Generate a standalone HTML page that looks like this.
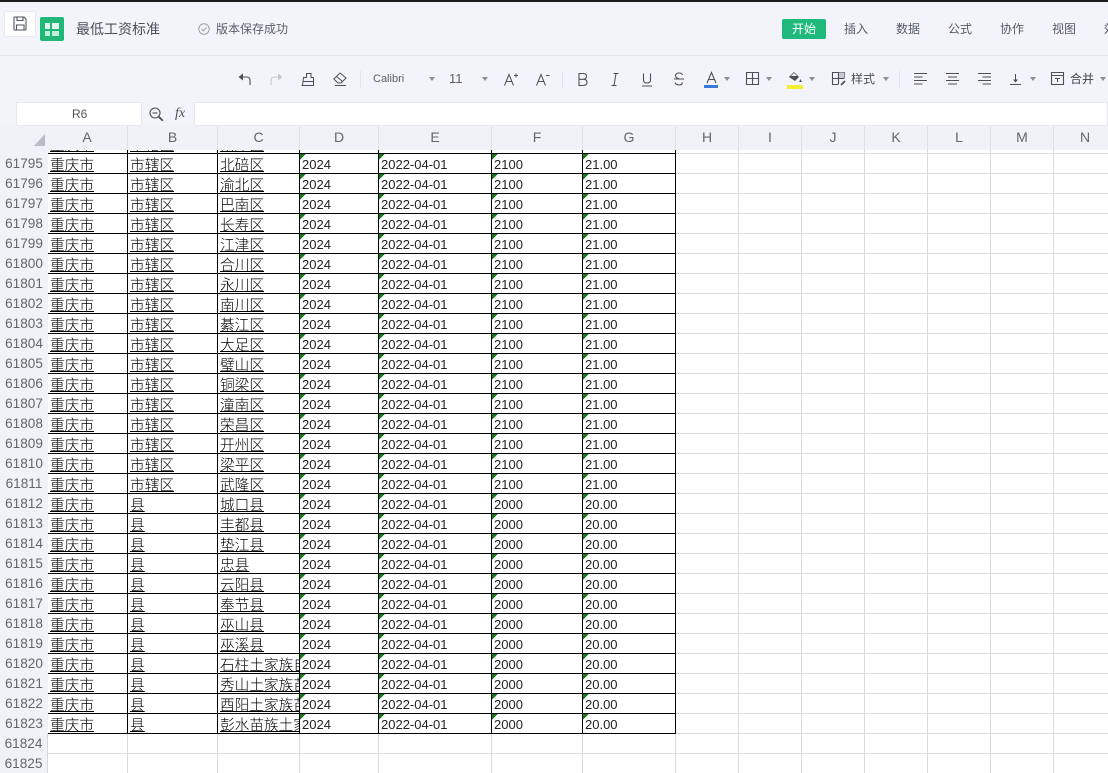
<!DOCTYPE html>
<html lang="zh"><head><meta charset="utf-8"><title>最低工资标准</title>
<style>
html,body{margin:0;padding:0;width:1108px;height:773px;overflow:hidden;background:#fff}
body{position:relative;font-family:"Liberation Sans","Noto Sans CJK SC",sans-serif;color:#444}
.a{position:absolute}
#chrome{left:0;top:0;width:1108px;height:126px;background:#f2f4f9;z-index:5}
.t{position:absolute;white-space:nowrap;line-height:16px;font-size:12px;color:#555b66}
.c{position:absolute;width:0;height:0;border-left:3.5px solid transparent;border-right:3.5px solid transparent;border-top:4px solid #8a8f99;top:77px}
.sep{position:absolute;top:71px;width:1px;height:17px;background:#dfe2e8}
svg{position:absolute;overflow:visible}
#hd{left:0;top:126px;width:1108px;height:24px;background:#f0f2f7;z-index:4}
#hd span{position:absolute;top:0;height:24px;line-height:23px;text-align:center;font-size:14px;color:#666;border-right:1px solid #dfe1e6;box-sizing:border-box}
#gutter{left:0;top:134px;width:47px;height:639px;background:#f0f2f7}
#grid{left:48px;top:134px;width:1060px;height:639px;background:repeating-linear-gradient(to bottom,transparent 0,transparent 19px,#dcdcdc 19px,#dcdcdc 20px)}
.v{position:absolute;top:134px;width:1px;height:639px;background:#dcdcdc}
table{position:absolute;left:0;top:134px;border-collapse:separate;border-spacing:0;table-layout:fixed;width:676px}
tr{height:20px}
th{font-weight:400;font-size:13.6px;color:#666;text-align:center;padding:0;box-sizing:border-box;height:20px;max-height:20px;line-height:16px;background:#f0f2f7;overflow:hidden}
td{box-sizing:border-box;height:20px;padding:3px 0 0 2px;border-right:1px solid #000;border-bottom:1px solid #000;overflow:hidden;white-space:nowrap;font-size:13px;color:#222;line-height:16px;background:#fff}
td.z{font-family:"Noto Sans CJK SC","WenQuanYi Zen Hei",sans-serif;font-weight:300;font-size:14.67px;color:#000;text-decoration:underline;text-underline-offset:1px;text-decoration-thickness:1px;line-height:16px;padding-top:3px}
td.n{background:#fff linear-gradient(135deg,#157a15 0,#157a15 4.2px,transparent 4.2px) no-repeat 0 0/7px 7px}
</style></head><body>
<div class="a" style="left:0;top:0;width:1108px;height:2px;background:#1c1c1c;z-index:6"></div>
<div class="a" id="chrome">
 <div class="a" style="left:0;top:55px;width:1108px;height:1px;background:#e1e3e8"></div>
 <div class="a" style="left:4px;top:11px;width:32px;height:26px;background:#fff;border:1px solid #e8eaef;border-radius:2px;box-sizing:border-box"></div>
 <svg style="left:13px;top:16px" width="14" height="15" viewBox="0 0 14 15" fill="none" stroke="#50555f" stroke-width="1.1"><path d="M1.500 1h9.500l2 2v10.500q0 .5-.5.5h-11q-.5 0-.5-.5v-12q0-.5.5-.5z"/><path d="M4 1v3.500h6V1M3.500 14V9h7.500v5"/></svg>
 <div class="a" style="left:40px;top:17px;width:24px;height:24px;border-radius:2px;background:#20b777"></div>
 <div class="a" style="left:45px;top:23px;width:5px;height:6px;background:#e4f7ee"></div>
 <div class="a" style="left:52px;top:23px;width:7px;height:6px;background:#e4f7ee"></div>
 <div class="a" style="left:45px;top:31px;width:5px;height:5px;background:#bfeeda"></div>
 <div class="a" style="left:52px;top:31px;width:7px;height:5px;background:#bfeeda"></div>
 <div class="t" style="left:76px;top:21px;font-size:14px;color:#4c5059">最低工资标准</div>
 <svg style="left:198px;top:23px" width="12" height="12" viewBox="0 0 12 12" fill="none" stroke="#9a9ea6" stroke-width="1"><circle cx="6" cy="6" r="5.200"/><path d="M3.600 6l1.800 1.800 3-3.200"/></svg>
 <div class="t" style="left:216px;top:21px;color:#5a5f69">版本保存成功</div>
 <div class="a" style="left:782px;top:19px;width:44px;height:20px;background:#1fb97b;border-radius:2px"></div>
 <div class="t" style="left:792px;top:21px;color:#fff">开始</div>
 <div class="t" style="left:844px;top:21px">插入</div>
 <div class="t" style="left:896px;top:21px">数据</div>
 <div class="t" style="left:948px;top:21px">公式</div>
 <div class="t" style="left:1000px;top:21px">协作</div>
 <div class="t" style="left:1052px;top:21px">视图</div>
 <div class="t" style="left:1104px;top:21px">效率</div>

 <svg style="left:238px;top:72px" width="13" height="14" viewBox="0 0 13 14" fill="none" stroke="#4a4f59" stroke-width="1.100"><path d="M12 13V8.500Q12 5 8.500 5H3"/><path d="M5 1.500L.5 5 5 8.500z" fill="#4a4f59" stroke="none"/></svg>
 <svg style="left:270px;top:72px" width="13" height="14" viewBox="0 0 13 14" fill="none" stroke="#c4c7cd" stroke-width="1.100"><path d="M1 13V8.500Q1 5 4.500 5H10"/><path d="M8 1.500L12.500 5 8 8.500z" fill="#c4c7cd" stroke="none"/></svg>
 <svg style="left:301px;top:72px" width="14" height="14" viewBox="0 0 14 14" fill="none" stroke="#4a4f59" stroke-width="1"><path d="M.5 13.500h12.500M1.500 13.500L2.500 5.500h3V1.500h4.500V5.500h2.500v8M2.200 9.500h10.300"/></svg>
 <svg style="left:333px;top:72px" width="14" height="14" viewBox="0 0 14 14" fill="none" stroke="#4a4f59" stroke-width="1"><path d="M.8 7L7 1l6 5-5 5H5zM3.500 4.500l6 5M2 13.500h11"/></svg>
 <div class="sep" style="left:360px"></div>
 <div class="t" style="left:373px;top:71px;font-size:11px;color:#5a5f69">Calibri</div>
 <div class="c" style="left:429px"></div>
 <div class="t" style="left:449px;top:71px;font-size:13px;color:#5a5f69">11</div>
 <div class="c" style="left:482px"></div>
 <svg style="left:504px;top:73px" width="14" height="13" viewBox="0 0 14 13" fill="none" stroke="#4a4f59" stroke-width="1"><path d="M.5 12.500L5 1.500l4.500 11M2 8.500h6M10 2.500h4M12 .5v4"/></svg>
 <svg style="left:536px;top:73px" width="14" height="13" viewBox="0 0 14 13" fill="none" stroke="#4a4f59" stroke-width="1"><path d="M.5 12.500L5 1.500l4.500 11M2 8.500h6M10 2.500h3.500"/></svg>
 <div class="sep" style="left:562px"></div>
 <svg style="left:578px;top:73px" width="10" height="13" viewBox="0 0 10 13" fill="none" stroke="#4a4f59" stroke-width="1.100"><path d="M1 .5h4Q8.500 .5 8.500 3.300T5 6.300H1zM1 6.300h4.500q3.500 0 3.500 3t-3.500 3.200H1z"/></svg>
 <svg style="left:611px;top:73px" width="8" height="13" viewBox="0 0 8 13" fill="none" stroke="#4a4f59" stroke-width="1"><path d="M2.500.5h5M.5 12.500h5M5 .5L3 12.500"/></svg>
 <svg style="left:642px;top:73px" width="10" height="14" viewBox="0 0 10 14" fill="none" stroke="#4a4f59" stroke-width="1.100"><path d="M1.500.5v6.500q0 3 3.500 3t3.500-3V.5M0 13h10"/></svg>
 <svg style="left:674px;top:72px" width="10" height="14" viewBox="0 0 10 14" fill="none" stroke="#4a4f59" stroke-width="1.100"><path d="M8.500 3Q8 1 5 1T1.500 3.500Q1.500 6 5 6.700M8.500 10.500Q8 13 5 13T1 10.500M0 7h10"/></svg>
 <svg style="left:706px;top:72px" width="11" height="11" viewBox="0 0 11 11" fill="none" stroke="#4a4f59" stroke-width="1.100"><path d="M1 11L5.500 .5 10 11M2.500 7.500h6"/></svg>
 <div class="a" style="left:704px;top:85px;width:14px;height:3px;background:#3c78d8"></div>
 <div class="c" style="left:724px"></div>
 <svg style="left:746px;top:72px" width="13" height="13" viewBox="0 0 13 13" fill="none" stroke="#4a4f59" stroke-width="1.100"><path d="M.5.500h12v12H.5zM6.500.5v12M.5 6.500h12"/></svg>
 <div class="c" style="left:766px"></div>
 <svg style="left:788px;top:71px" width="14" height="13" viewBox="0 0 14 13" fill="none"><path d="M1 6l5-5 5 5-4 4z" fill="#4a4f59"/><path d="M3 5h6L6 2z" fill="#f2f4f9"/><path d="M12.500 8l1.300 3h-2.600z" fill="#4a4f59"/></svg>
 <div class="a" style="left:787px;top:85px;width:16px;height:4px;background:#f5f030"></div>
 <div class="c" style="left:809px"></div>
 <svg style="left:832px;top:72px" width="14" height="14" viewBox="0 0 14 14" fill="none" stroke="#4a4f59" stroke-width="1.100"><path d="M6 12.500H.5V.500h12V6M.5 6.500h12M6.500.5v12"/><path d="M7 .5h5.500V6H7z" fill="#c6c9d0" stroke="none"/><path d="M9 13l4-4" stroke-width="1.800"/></svg>
 <div class="t" style="left:851px;top:71px;color:#4a4f59">样式</div>
 <div class="c" style="left:883px"></div>
 <div class="sep" style="left:899px"></div>
 <svg style="left:914px;top:73px" width="13" height="12" viewBox="0 0 13 12" fill="none" stroke="#4a4f59"><path d="M0 .5h13M0 4h8.500M0 7.500h13M0 11h8.500"/></svg>
 <svg style="left:946px;top:73px" width="13" height="12" viewBox="0 0 13 12" fill="none" stroke="#4a4f59"><path d="M0 .5h13M2 4h9M0 7.500h13M2 11h9"/></svg>
 <svg style="left:978px;top:73px" width="13" height="12" viewBox="0 0 13 12" fill="none" stroke="#4a4f59"><path d="M0 .5h13M4.500 4H13M0 7.500h13M4.500 11H13"/></svg>
 <svg style="left:1010px;top:74px" width="11" height="11" viewBox="0 0 11 11" fill="none" stroke="#4a4f59"><path d="M0 10.500h11M5.500 0v6"/><path d="M3 5.500h5L5.500 8.500z" fill="#4a4f59" stroke="none"/></svg>
 <div class="c" style="left:1030px"></div>
 <svg style="left:1051px;top:72px" width="13" height="13" viewBox="0 0 13 13" fill="none" stroke="#4a4f59" stroke-width="1.100"><path d="M.5.500h12v12H.5zM.5 3.500h12M4 6.500h5M6.500 6.500v3.500"/></svg>
 <div class="t" style="left:1070px;top:71px;color:#3f444e">合并</div>
 <div class="c" style="left:1100px"></div>

 <div class="a" style="left:16px;top:102px;width:126px;height:24px;background:#fff;border:1px solid #e6e8ed;box-sizing:border-box"></div>
 <div class="t" style="left:72px;top:106px;color:#555">R6</div>
 <svg style="left:149px;top:107px" width="15" height="15" viewBox="0 0 15 15" fill="none" stroke="#4a4f59" stroke-width="1.100"><circle cx="6" cy="6" r="5"/><path d="M3.500 6h5"/><path d="M9.800 9.800l4 4" stroke-width="1.800"/></svg>
 <div class="t" style="left:175px;top:106px;font-family:'Liberation Serif',serif;font-style:italic;font-size:14px;color:#4a4f59">fx</div>
 <div class="a" style="left:194px;top:102px;width:914px;height:24px;background:#fff;border:1px solid #e6e8ed;box-sizing:border-box"></div>
</div>
<div class="a" id="hd">
 <svg style="left:34px;top:8px" width="11" height="12" viewBox="0 0 11 12"><path d="M11 0v12H0z" fill="#b8bcc4"/></svg>
 <span style="left:47px;width:81px">A</span><span style="left:128px;width:90px">B</span><span style="left:218px;width:82px">C</span><span style="left:300px;width:79px">D</span><span style="left:379px;width:113px">E</span><span style="left:492px;width:91px">F</span><span style="left:583px;width:93px">G</span><span style="left:676px;width:63px">H</span><span style="left:739px;width:63px">I</span><span style="left:802px;width:63px">J</span><span style="left:865px;width:63px">K</span><span style="left:928px;width:63px">L</span><span style="left:991px;width:63px">M</span><span style="left:1054px;width:63px">N</span>
</div>
<div class="a" id="gutter"></div>
<div class="a" id="grid"></div>
<div class="a" style="left:47px;top:134px;width:1px;height:639px;background:#d8d8d8"></div>
<i class="v" style="left:127px"></i><i class="v" style="left:217px"></i><i class="v" style="left:299px"></i><i class="v" style="left:378px"></i><i class="v" style="left:491px"></i><i class="v" style="left:582px"></i><i class="v" style="left:675px"></i><i class="v" style="left:738px"></i><i class="v" style="left:801px"></i><i class="v" style="left:864px"></i><i class="v" style="left:927px"></i><i class="v" style="left:990px"></i><i class="v" style="left:1053px"></i>
<table>
<colgroup><col style="width:48px"><col style="width:80px"><col style="width:90px"><col style="width:82px"><col style="width:79px"><col style="width:113px"><col style="width:91px"><col style="width:93px"></colgroup>
<tr><th>61794</th><td class="z">重庆市</td><td class="z">市辖区</td><td class="z">南岸区</td><td class="n">2024</td><td class="n">2022-04-01</td><td class="n">2100</td><td class="n">21.00</td></tr>
<tr><th>61795</th><td class="z">重庆市</td><td class="z">市辖区</td><td class="z">北碚区</td><td class="n">2024</td><td class="n">2022-04-01</td><td class="n">2100</td><td class="n">21.00</td></tr>
<tr><th>61796</th><td class="z">重庆市</td><td class="z">市辖区</td><td class="z">渝北区</td><td class="n">2024</td><td class="n">2022-04-01</td><td class="n">2100</td><td class="n">21.00</td></tr>
<tr><th>61797</th><td class="z">重庆市</td><td class="z">市辖区</td><td class="z">巴南区</td><td class="n">2024</td><td class="n">2022-04-01</td><td class="n">2100</td><td class="n">21.00</td></tr>
<tr><th>61798</th><td class="z">重庆市</td><td class="z">市辖区</td><td class="z">长寿区</td><td class="n">2024</td><td class="n">2022-04-01</td><td class="n">2100</td><td class="n">21.00</td></tr>
<tr><th>61799</th><td class="z">重庆市</td><td class="z">市辖区</td><td class="z">江津区</td><td class="n">2024</td><td class="n">2022-04-01</td><td class="n">2100</td><td class="n">21.00</td></tr>
<tr><th>61800</th><td class="z">重庆市</td><td class="z">市辖区</td><td class="z">合川区</td><td class="n">2024</td><td class="n">2022-04-01</td><td class="n">2100</td><td class="n">21.00</td></tr>
<tr><th>61801</th><td class="z">重庆市</td><td class="z">市辖区</td><td class="z">永川区</td><td class="n">2024</td><td class="n">2022-04-01</td><td class="n">2100</td><td class="n">21.00</td></tr>
<tr><th>61802</th><td class="z">重庆市</td><td class="z">市辖区</td><td class="z">南川区</td><td class="n">2024</td><td class="n">2022-04-01</td><td class="n">2100</td><td class="n">21.00</td></tr>
<tr><th>61803</th><td class="z">重庆市</td><td class="z">市辖区</td><td class="z">綦江区</td><td class="n">2024</td><td class="n">2022-04-01</td><td class="n">2100</td><td class="n">21.00</td></tr>
<tr><th>61804</th><td class="z">重庆市</td><td class="z">市辖区</td><td class="z">大足区</td><td class="n">2024</td><td class="n">2022-04-01</td><td class="n">2100</td><td class="n">21.00</td></tr>
<tr><th>61805</th><td class="z">重庆市</td><td class="z">市辖区</td><td class="z">璧山区</td><td class="n">2024</td><td class="n">2022-04-01</td><td class="n">2100</td><td class="n">21.00</td></tr>
<tr><th>61806</th><td class="z">重庆市</td><td class="z">市辖区</td><td class="z">铜梁区</td><td class="n">2024</td><td class="n">2022-04-01</td><td class="n">2100</td><td class="n">21.00</td></tr>
<tr><th>61807</th><td class="z">重庆市</td><td class="z">市辖区</td><td class="z">潼南区</td><td class="n">2024</td><td class="n">2022-04-01</td><td class="n">2100</td><td class="n">21.00</td></tr>
<tr><th>61808</th><td class="z">重庆市</td><td class="z">市辖区</td><td class="z">荣昌区</td><td class="n">2024</td><td class="n">2022-04-01</td><td class="n">2100</td><td class="n">21.00</td></tr>
<tr><th>61809</th><td class="z">重庆市</td><td class="z">市辖区</td><td class="z">开州区</td><td class="n">2024</td><td class="n">2022-04-01</td><td class="n">2100</td><td class="n">21.00</td></tr>
<tr><th>61810</th><td class="z">重庆市</td><td class="z">市辖区</td><td class="z">梁平区</td><td class="n">2024</td><td class="n">2022-04-01</td><td class="n">2100</td><td class="n">21.00</td></tr>
<tr><th>61811</th><td class="z">重庆市</td><td class="z">市辖区</td><td class="z">武隆区</td><td class="n">2024</td><td class="n">2022-04-01</td><td class="n">2100</td><td class="n">21.00</td></tr>
<tr><th>61812</th><td class="z">重庆市</td><td class="z">县</td><td class="z">城口县</td><td class="n">2024</td><td class="n">2022-04-01</td><td class="n">2000</td><td class="n">20.00</td></tr>
<tr><th>61813</th><td class="z">重庆市</td><td class="z">县</td><td class="z">丰都县</td><td class="n">2024</td><td class="n">2022-04-01</td><td class="n">2000</td><td class="n">20.00</td></tr>
<tr><th>61814</th><td class="z">重庆市</td><td class="z">县</td><td class="z">垫江县</td><td class="n">2024</td><td class="n">2022-04-01</td><td class="n">2000</td><td class="n">20.00</td></tr>
<tr><th>61815</th><td class="z">重庆市</td><td class="z">县</td><td class="z">忠县</td><td class="n">2024</td><td class="n">2022-04-01</td><td class="n">2000</td><td class="n">20.00</td></tr>
<tr><th>61816</th><td class="z">重庆市</td><td class="z">县</td><td class="z">云阳县</td><td class="n">2024</td><td class="n">2022-04-01</td><td class="n">2000</td><td class="n">20.00</td></tr>
<tr><th>61817</th><td class="z">重庆市</td><td class="z">县</td><td class="z">奉节县</td><td class="n">2024</td><td class="n">2022-04-01</td><td class="n">2000</td><td class="n">20.00</td></tr>
<tr><th>61818</th><td class="z">重庆市</td><td class="z">县</td><td class="z">巫山县</td><td class="n">2024</td><td class="n">2022-04-01</td><td class="n">2000</td><td class="n">20.00</td></tr>
<tr><th>61819</th><td class="z">重庆市</td><td class="z">县</td><td class="z">巫溪县</td><td class="n">2024</td><td class="n">2022-04-01</td><td class="n">2000</td><td class="n">20.00</td></tr>
<tr><th>61820</th><td class="z">重庆市</td><td class="z">县</td><td class="z">石柱土家族自治县</td><td class="n">2024</td><td class="n">2022-04-01</td><td class="n">2000</td><td class="n">20.00</td></tr>
<tr><th>61821</th><td class="z">重庆市</td><td class="z">县</td><td class="z">秀山土家族苗族自治县</td><td class="n">2024</td><td class="n">2022-04-01</td><td class="n">2000</td><td class="n">20.00</td></tr>
<tr><th>61822</th><td class="z">重庆市</td><td class="z">县</td><td class="z">酉阳土家族苗族自治县</td><td class="n">2024</td><td class="n">2022-04-01</td><td class="n">2000</td><td class="n">20.00</td></tr>
<tr><th>61823</th><td class="z">重庆市</td><td class="z">县</td><td class="z">彭水苗族土家族自治县</td><td class="n">2024</td><td class="n">2022-04-01</td><td class="n">2000</td><td class="n">20.00</td></tr>
</table>
<div class="a" style="left:0;top:736px;width:47px;text-align:center;font-size:13.6px;line-height:16px;color:#666">61824</div>
<div class="a" style="left:0;top:756px;width:47px;text-align:center;font-size:13.6px;line-height:16px;color:#666">61825</div>
</body></html>
